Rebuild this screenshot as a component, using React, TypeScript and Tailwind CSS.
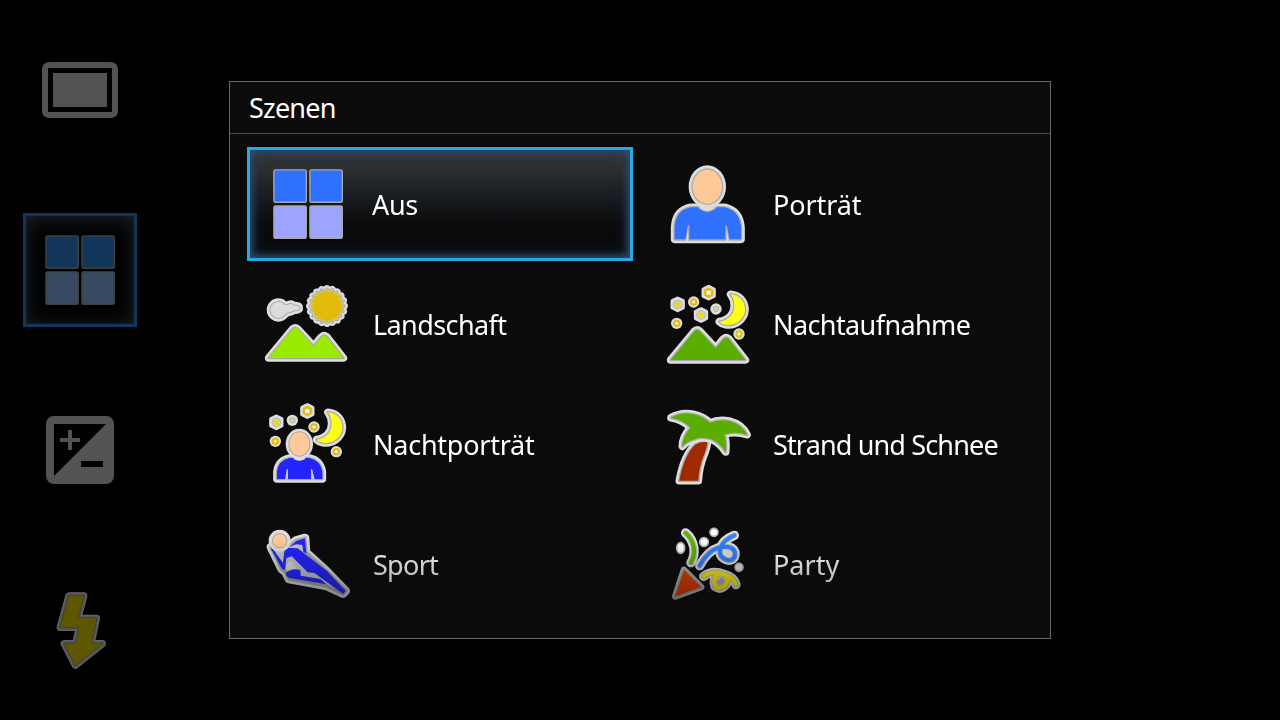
import type { ReactNode } from "react";
import clsx from "clsx";

const MOUNTAIN =
  "M41 249 L112 163 Q120 155 129 163 L176 214 L199 186 Q208 178 216 186 L265 249 Z";
const MOON =
  "M227 58 C256 60 271 82 270 106 C268 134 240 154 212 149 Q200 147 193 140 C222 136 238 116 238 92 Q238 72 227 58 Z";
const CLOUD =
  "M87 88 A24 24 0 1 0 88 121 Q95 112 105 111 Q113 110 118 105 Q128 108 133 102 Q134 93 126 92 Q118 93 114 89 Q106 84 98 90 Q92 92 87 88 Z";
const SKIER =
  "M48 96 L66 86 L108 90 L124 76 L150 69 L153 112 L214 168 L272 228 L264 236 L212 212 L102 192 L92 172 L80 162 Z";

// zigzag disc of the sun
const SUN = Array.from({ length: 40 }, (_, i) => {
  const r = i % 2 ? 42 : 51;
  const a = (i * Math.PI) / 20;
  return `${(216 + r * Math.cos(a)).toFixed(1)},${(93 + r * Math.sin(a)).toFixed(1)}`;
}).join(" ");

const Shape = ({ d, fill }: { d: string; fill: string }) => (
  <g strokeLinejoin="round">
    <path d={d} stroke="#dedede" strokeWidth={23} />
    <path d={d} stroke="#ababab" strokeWidth={8} />
    <path d={d} fill={fill} />
  </g>
);

type StarProps = { x: number; y: number; kind: "big" | "gold" | "pale" | "dot" | "ring" };

const Star = ({ x, y, kind }: StarProps) => {
  const large = kind === "big" || kind === "pale";
  const hex = "0,-18 16,-10 16,10 0,18 -16,10 -16,-10";
  const star = "0,-9 3,-4 9,-4 5,1 7,8 0,5 -7,8 -5,1 -9,-4 -3,-4";
  return (
    <g transform={`translate(${x} ${y})`} strokeLinejoin="round">
      {large ? (
        <polygon points={hex} fill="#dedede" stroke="#dedede" strokeWidth={11} />
      ) : (
        <circle r={17} fill="#dedede" />
      )}
      {kind === "big" && (
        <>
          <polygon points="0,-15 13,-8 13,8 0,15 -13,8 -13,-8" fill="#e3bb0a" stroke="#e3bb0a" strokeWidth={2} />
          <polygon points={star} fill="#fff" />
        </>
      )}
      {kind === "pale" && (
        <>
          <circle r={14} fill="#b4b4b4" />
          <circle r={11} fill="#dcd6c0" />
          <polygon points={star} fill="#f0d800" stroke="#f0d800" strokeWidth={2} />
        </>
      )}
      {kind === "gold" && (
        <>
          <circle r={11} fill="#e3bb0a" />
          <path d="M0 -5 V5 M-5 0 H5" stroke="#fff" strokeWidth={4} />
        </>
      )}
      {kind === "ring" && (
        <>
          <circle r={11} fill="#e3bb0a" />
          <circle r={5} fill="#ececec" />
        </>
      )}
      {kind === "dot" && (
        <>
          <circle r={9} fill="#b4b4b4" />
          <circle r={6} fill="#d2d2d2" />
          <circle r={3} fill="#f0e000" />
        </>
      )}
    </g>
  );
};

const Tiles = ({ top, bottom, edge }: { top: string; bottom: string; edge: string }) => (
  <svg width={96} height={96} viewBox="0 0 96 96">
    <g stroke={edge} strokeWidth={1.4}>
      <rect x="13.9" y="13.9" width="32.4" height="32.4" rx="1.5" fill={top} />
      <rect x="49.9" y="13.9" width="32.4" height="32.4" rx="1.5" fill={top} />
      <rect x="13.9" y="49.9" width="32.4" height="32.4" rx="1.5" fill={bottom} />
      <rect x="49.9" y="49.9" width="32.4" height="32.4" rx="1.5" fill={bottom} />
    </g>
  </svg>
);

const Drawing = ({ children, y = 3 }: { children: ReactNode; y?: number }) => (
  <svg width={96} height={96} viewBox={`15 ${y} 288 288`} fill="none">
    {children}
  </svg>
);

const PortraitIcon = () => (
  <Drawing y={18}>
    <Shape
      d="M59 268 V232 Q62 180 108 172 L128 172 Q157 198 186 172 L208 172 Q254 182 258 232 V268 Z"
      fill="#3070ff"
    />
    <path d="M91 270 L98 228 L103 224 L103 270 Z M211 270 L211 224 L216 228 L224 270 Z" fill="#ababab" />
    <path d="M93 276 L99 238 L100 276 Z M215 276 L215 238 L222 276 Z" fill="#dedede" />
    <ellipse cx={157} cy={110} rx={56} ry={64} fill="#dedede" />
    <ellipse cx={157} cy={110} rx={48} ry={55} fill="#ababab" />
    <ellipse cx={157} cy={110} rx={44} ry={51} fill="#ffc899" />
    <path d="M130 173 Q157 196 184 173" stroke="#ababab" strokeWidth={3} />
    <path d="M138 171 Q157 186 175 171" stroke="#dedede" strokeWidth={9} />
  </Drawing>
);

const LandscapeIcon = () => (
  <Drawing>
    <g strokeLinejoin="round">
      <path d={CLOUD} stroke="#dedede" strokeWidth={22} />
      <path d={CLOUD} stroke="#ababab" strokeWidth={6} />
      <path d={CLOUD} fill="#dcdcdc" />
    </g>
    <g strokeLinejoin="round">
      <polygon points={SUN} stroke="#dedede" strokeWidth={23} />
      <polygon points={SUN} stroke="#a8a8a8" strokeWidth={10} />
      <polygon points={SUN} stroke="#d0d0d0" strokeWidth={4} />
      <polygon points={SUN} fill="#e3bb0a" />
    </g>
    <Shape d={MOUNTAIN} fill="#99eb00" />
  </Drawing>
);

const NightIcon = () => (
  <Drawing>
    <Star x={68} y={88} kind="pale" />
    <Star x={116} y={81} kind="ring" />
    <Star x={161} y={53} kind="big" />
    <Star x={183} y={102} kind="dot" />
    <Star x={138} y={120} kind="pale" />
    <Star x={65} y={145} kind="ring" />
    <Shape d={MOON} fill="#ffff14" />
    <g transform="translate(6 6)">
      <Shape d={MOUNTAIN} fill="#59ae00" />
    </g>
    <Star x={252} y={177} kind="gold" />
  </Drawing>
);

const NightPortraitIcon = () => (
  <Drawing>
    <Star x={64} y={82} kind="pale" />
    <Star x={112} y={76} kind="dot" />
    <Star x={157} y={48} kind="big" />
    <Star x={61} y={139} kind="gold" />
    <g transform="translate(-8 -6)">
      <Shape d={MOON} fill="#ffff14" />
    </g>
    <Star x={177} y={96} kind="ring" />
    <Star x={244} y={170} kind="gold" />
    <Shape
      d="M66 252 V230 Q70 196 104 189 H114 Q133 203 152 189 H163 Q196 196 202 230 V252 Z"
      fill="#2424ff"
    />
    <path d="M90 254 L95 224 L99 221 L99 254 Z M168 254 L168 221 L172 224 L179 254 Z" fill="#c4c4c4" />
    <ellipse cx={133} cy={147} rx={41} ry={46} fill="#dedede" />
    <ellipse cx={133} cy={147} rx={33} ry={38} fill="#ababab" />
    <ellipse cx={133} cy={147} rx={30} ry={35} fill="#ffc899" />
    <path d="M118 188 Q133 197 148 188" stroke="#dedede" strokeWidth={10} />
  </Drawing>
);

const PalmIcon = () => (
  <Drawing>
    <Shape
      d="M73 257 Q87 180 122 148 Q140 138 157 142 Q158 150 149 175 Q132 215 130 257 Z"
      fill="#a02a00"
    />
    <Shape
      d="M48 68 Q80 50 115 58 Q145 64 165 84 Q190 72 222 78 Q262 88 276 119 Q240 108 208 118 Q215 140 212 171 Q195 145 170 133 Q140 122 112 135 Q92 142 82 154 Q82 125 107 98 Q85 75 48 68 Z"
      fill="#59ae00"
    />
  </Drawing>
);

const SkierIcon = () => (
  <Drawing>
    <g strokeLinejoin="round" strokeLinecap="round">
      <path d={SKIER} fill="#dadada" stroke="#dadada" strokeWidth={26} />
      <path d={SKIER} fill="#c6c6c6" stroke="#a6a6a6" strokeWidth={10} />
      <path d="M97 178 L92 150 L106 138 L128 164 Z" fill="#dcdcdc" />
      <path d="M106 94 L124 78 L150 70 L154 116 L145 110 L142 90 L124 88 Z" fill="#2424ff" />
      <path d="M46 98 L54 102 L84 144 L88 108 L100 98 L128 100 L216 168 L272 228 L264 236 L178 174 L158 172 L110 124 L94 130 L90 166 L80 160 Z" fill="#2424ff" />
      <path d="M92 174 Q110 158 136 165 L137 182 L196 192 L214 208 L108 190 Q94 188 92 174 Z" fill="#2424ff" />
    </g>
    <circle cx={74} cy={77} r={33} fill="#dedede" />
    <circle cx={74} cy={77} r={23} fill="#ababab" />
    <circle cx={74} cy={77} r={20} fill="#ffc899" />
  </Drawing>
);

const Ribbon = ({ d, color }: { d: string; color: string }) => (
  <g strokeLinecap="round" strokeLinejoin="round">
    <path d={d} stroke="#dedede" strokeWidth={28} />
    <path d={d} stroke="#b4b4b4" strokeWidth={17} />
    <path d={d} stroke={color} strokeWidth={12} />
  </g>
);

const PartyIcon = () => (
  <Drawing>
    <Ribbon d="M92 54 Q112 70 117 100 Q119 125 108 143" color="#5cb400" />
    <Ribbon
      d="M134 152 Q158 108 190 98 Q232 88 240 112 Q242 136 220 136 Q190 128 196 100 Q204 74 238 61"
      color="#3080ff"
    />
    <ellipse cx={217} cy={117} rx={15} ry={9} transform="rotate(25 217 117)" fill="#dedede" />
    <Ribbon
      d="M146 184 Q172 164 206 178 Q236 186 243 209 M206 178 Q226 190 212 210 Q196 226 180 214 Q172 192 190 178"
      color="#fff000"
    />
    <ellipse cx={198} cy={200} rx={11} ry={8} transform="rotate(-35 198 200)" fill="#aaa" />
    <g strokeLinejoin="round">
      <path d="M87 165 L138 216 L61 244 Z" stroke="#b4b4b4" strokeWidth={20} />
      <path d="M87 165 L138 216 L61 244 Z" stroke="#989898" strokeWidth={8} />
      <path d="M87 165 L138 216 L61 244 Z" fill="#e03c00" />
    </g>
    <g fill="#fff" stroke="#b8b8b8" strokeWidth={5}>
      <circle cx={177} cy={52} r={12} />
      <circle cx={147} cy={81} r={13} />
      <ellipse cx={77} cy={99} rx={12} ry={16} />
      <circle cx={252} cy={157} r={12} fill="#e0e0e0" />
    </g>
  </Drawing>
);

const FrameIcon = () => (
  <svg width={76} height={56} viewBox="0 0 76 56">
    <rect x="3" y="3" width="70" height="50" rx="4" fill="none" stroke="#535353" strokeWidth={6} />
    <rect x="11" y="11" width="54" height="34" fill="#535353" />
  </svg>
);

const ExposureIcon = () => (
  <svg width={68} height={68} viewBox="0 0 68 68">
    <rect width="68" height="68" rx="8" fill="#535353" />
    <path d="M8 8 H60 L8 60 Z" fill="#000" />
    <path d="M14 24 H34 M24 14 V34" stroke="#535353" strokeWidth={4} />
    <rect x="35" y="45" width="22" height="6" fill="#000" />
  </svg>
);

const FlashIcon = () => {
  const d = "M177 588 H221 L203 655 H259 L243 731 H277 L196 795 L163 731 H198 L208 682 H151 Z";
  return (
    <svg width={96} height={96} viewBox="66 546 288 288" fill="none" strokeLinejoin="round">
      <path d={d} stroke="#6b6b6b" strokeWidth={22} />
      <path d={d} stroke="#565656" strokeWidth={17} />
      <path d={d} stroke="#42433d" strokeWidth={7} />
      <path d={d} fill="#5e5600" />
    </svg>
  );
};

const scenes = [
  {
    id: 1,
    text: "Aus",
    tracking: "tracking-[-0.3px] ml-[16px]",
    icon: <Tiles top="#3070ff" bottom="#9ca4ff" edge="#a8a8a4" />,
  },
  { id: 2, text: "Porträt", tracking: "tracking-[-0.1px] ml-[17px]", icon: <PortraitIcon /> },
  { id: 3, text: "Landschaft", tracking: "tracking-[-0.6px] ml-[17px]", icon: <LandscapeIcon /> },
  { id: 4, text: "Nachtaufnahme", tracking: "tracking-[-0.6px] ml-[17px]", icon: <NightIcon /> },
  { id: 5, text: "Nachtporträt", tracking: "tracking-[-0.25px] ml-[17px]", icon: <NightPortraitIcon /> },
  { id: 6, text: "Strand und Schnee", tracking: "tracking-[-0.85px] ml-[17px]", icon: <PalmIcon /> },
  { id: 7, text: "Sport", tracking: "tracking-[-0.7px] ml-[17px]", icon: <SkierIcon /> },
  { id: 8, text: "Party", tracking: "tracking-normal ml-[17px]", icon: <PartyIcon /> },
];

const settings = [
  { id: 1, icon: <FrameIcon /> },
  { id: 2, icon: <Tiles top="#12365a" bottom="#384a62" edge="#3e4142" />, selected: true },
  { id: 3, icon: <ExposureIcon /> },
  { id: 4, icon: <FlashIcon /> },
];

export default function App() {
  return (
    <div className="flex h-[720px] w-[1280px] overflow-hidden bg-black font-['Noto_Sans',sans-serif] text-[27px] leading-none text-white">
      <nav className="flex w-[160px] flex-col">
        {settings.map(({ id, icon, selected }) => (
          <div key={id} className="flex h-[180px] items-center justify-center">
            <button
              className={clsx(
                "flex size-[114px] items-center justify-center",
                selected &&
                  "border-[3px] border-[#12365a] shadow-[inset_0_3px_22px_#1c2024,inset_0_0_5px_#141e28]"
              )}
            >
              {icon}
            </button>
          </div>
        ))}
      </nav>

      <main className="mt-[81px] ml-[69px] h-[558px] w-[822px] border border-[#696969] bg-[#0b0b0b]">
        <header className="flex h-[52px] items-center border-b border-[#4a4a4a] pl-[19px]">
          <h1 className="tracking-[-0.8px]">Szenen</h1>
        </header>
        <div className="grid h-[490px] grid-cols-[386px_386px] content-start gap-x-[14px] gap-y-[6px] pt-[13px] pl-[17px] [mask-image:linear-gradient(to_bottom,#000_405px,#0000_550px)]">
          {scenes.map(({ id, text, tracking, icon }) => (
            <button
              key={id}
              className={clsx(
                "flex h-[114px] items-center border-[3px] pl-[10px] text-left",
                id === 1
                  ? "border-[#29a8e4] bg-[linear-gradient(#35393d_2%,#2b2c2c_22%,#171b1f_45%,#0b0b0c_68%,#090909)] shadow-[inset_0_0_7px_2px_#31506f,inset_0_0_16px_#183452]"
                  : "border-transparent"
              )}
            >
              {icon}
              <span className={clsx("whitespace-nowrap", tracking)}>{text}</span>
            </button>
          ))}
        </div>
      </main>
    </div>
  );
}
